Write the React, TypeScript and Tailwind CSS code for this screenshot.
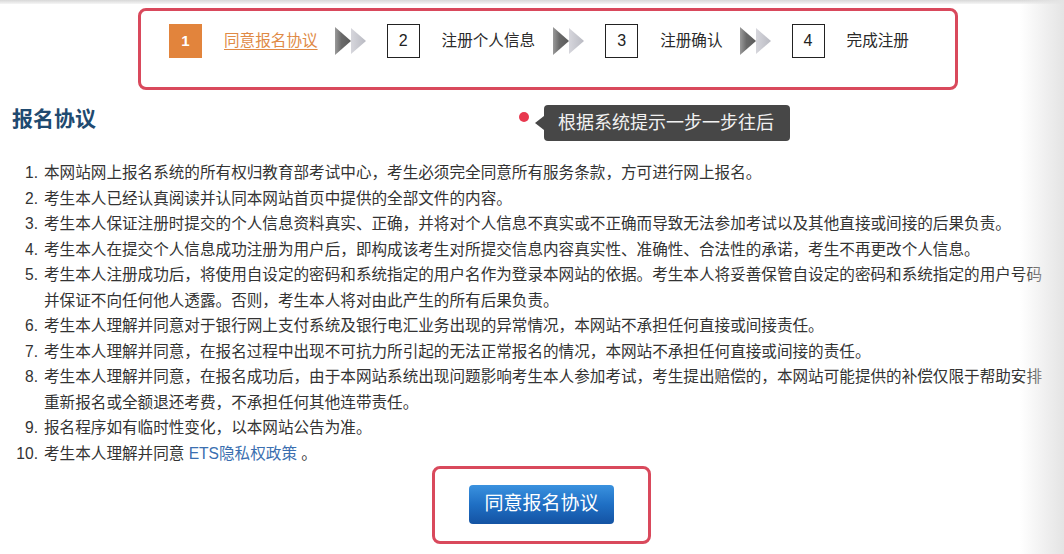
import React from "react";

const FONT = { fontFamily: '"Liberation Sans", "Noto Sans CJK SC", sans-serif' };

function Arrows() {
  return (
    <svg width="31" height="28" viewBox="0 0 31 28" className="shrink-0">
      <defs>
        <linearGradient id="ga" x1="0" y1="0" x2="1" y2="0">
          <stop offset="0" stopColor="#9a9a9a" />
          <stop offset="0.4" stopColor="#6a6a6a" />
          <stop offset="1" stopColor="#5a5a5a" />
        </linearGradient>
        <linearGradient id="gb" x1="0" y1="0" x2="1" y2="0">
          <stop offset="0" stopColor="#d6d6dc" />
          <stop offset="1" stopColor="#b9bac2" />
        </linearGradient>
      </defs>
      <polygon points="0,0 16,14 0,28" fill="url(#ga)" />
      <polygon points="16,1 31,14 16,27" fill="url(#gb)" />
    </svg>
  );
}

function NumBox({ n }: { n: string }) {
  return (
    <div className="w-[33px] h-[34px] border-[1.5px] border-[#222] bg-white flex items-center justify-center text-[16px] text-[#222] shrink-0">
      {n}
    </div>
  );
}

const items: React.ReactNode[] = [
  "本网站网上报名系统的所有权归教育部考试中心，考生必须完全同意所有服务条款，方可进行网上报名。",
  "考生本人已经认真阅读并认同本网站首页中提供的全部文件的内容。",
  "考生本人保证注册时提交的个人信息资料真实、正确，并将对个人信息不真实或不正确而导致无法参加考试以及其他直接或间接的后果负责。",
  "考生本人在提交个人信息成功注册为用户后，即构成该考生对所提交信息内容真实性、准确性、合法性的承诺，考生不再更改个人信息。",
  <>
    考生本人注册成功后，将使用自设定的密码和系统指定的用户名作为登录本网站的依据。考生本人将妥善保管自设定的密码和系统指定的用户号码
    <br />
    并保证不向任何他人透露。否则，考生本人将对由此产生的所有后果负责。
  </>,
  "考生本人理解并同意对于银行网上支付系统及银行电汇业务出现的异常情况，本网站不承担任何直接或间接责任。",
  "考生本人理解并同意，在报名过程中出现不可抗力所引起的无法正常报名的情况，本网站不承担任何直接或间接的责任。",
  <>
    考生本人理解并同意，在报名成功后，由于本网站系统出现问题影响考生本人参加考试，考生提出赔偿的，本网站可能提供的补偿仅限于帮助安排
    <br />
    重新报名或全额退还考费，不承担任何其他连带责任。
  </>,
  "报名程序如有临时性变化，以本网站公告为准。",
  <>
    考生本人理解并同意 <span className="text-[#3b6fb0]">ETS隐私权政策</span> 。
  </>,
];

export default function App() {
  return (
    <div className="relative w-[1064px] h-[554px] bg-white overflow-hidden" style={FONT}>
      <div className="h-[4px] bg-gradient-to-b from-[#d8d8d8] to-[#f6f6f6]" />

      {/* steps */}
      <div className="ml-[138px] mt-[4px] w-[820px] h-[82px] border-[3px] border-[#d9495c] rounded-[8px] pl-[28px] pt-[13px]">
        <div className="flex items-center h-[34px]">
          <div className="w-[33px] h-[34px] bg-[#e2843c] flex items-center justify-center text-white text-[15px] font-bold shrink-0">
            1
          </div>
          <span className="ml-[22px] text-[15.6px] text-[#e08a45] underline underline-offset-[3px] whitespace-nowrap">
            同意报名协议
          </span>
          <div className="ml-[17px]">
            <Arrows />
          </div>
          <div className="ml-[21px]">
            <NumBox n="2" />
          </div>
          <span className="ml-[22px] text-[15.6px] text-[#2a2a2a] whitespace-nowrap">注册个人信息</span>
          <div className="ml-[18px]">
            <Arrows />
          </div>
          <div className="ml-[21px]">
            <NumBox n="3" />
          </div>
          <span className="ml-[22px] text-[15.6px] text-[#2a2a2a] whitespace-nowrap">注册确认</span>
          <div className="ml-[17px]">
            <Arrows />
          </div>
          <div className="ml-[21px]">
            <NumBox n="4" />
          </div>
          <span className="ml-[22px] text-[15.6px] text-[#2a2a2a] whitespace-nowrap">完成注册</span>
        </div>
      </div>

      {/* heading */}
      <div className="relative mt-[11px] h-[40px]">
        <h1 className="pl-[12px] text-[21px] leading-[36px] font-bold text-[#1f4a70]">报名协议</h1>
        <div className="absolute left-[519px] top-[11px] w-[10px] h-[10px] rounded-full bg-[#e8384f]" />
        <div className="absolute left-[535px] top-[4px] flex items-center">
          <div className="w-0 h-0 border-y-[7px] border-y-transparent border-r-[9px] border-r-[#474747]" />
          <div className="h-[36px] w-[246px] bg-[#474747] rounded-[4px] flex items-center pl-[14px] text-[18px] text-[#f2f2f2] whitespace-nowrap">
            根据系统提示一步一步往后
          </div>
        </div>
      </div>

      {/* list */}
      <ol className="mt-[19px] text-[15.6px] leading-[25.5px] text-[#333]">
        {items.map((t, i) => (
          <li key={i} className="flex">
            <span className="w-[38px] text-right shrink-0">{i + 1}.</span>
            <span className="ml-[6px] whitespace-nowrap">{t}</span>
          </li>
        ))}
      </ol>

      {/* button */}
      <div className="ml-[432px] mt-0 w-[219px] h-[78px] border-[3px] border-[#d9495c] rounded-[8px] flex items-center justify-center">
        <button className="w-[145px] h-[39px] rounded-[4px] bg-gradient-to-b from-[#3a92df] via-[#1f6fc4] to-[#1453a3] text-white text-[19px] flex items-center justify-center mt-[-1px]">
          同意报名协议
        </button>
      </div>

      {/* screen edge shading */}
      <div className="pointer-events-none absolute right-0 top-0 h-full w-[44px] bg-gradient-to-r from-[#ffffff00] to-[#e4e4e4]" />
    </div>
  );
}
